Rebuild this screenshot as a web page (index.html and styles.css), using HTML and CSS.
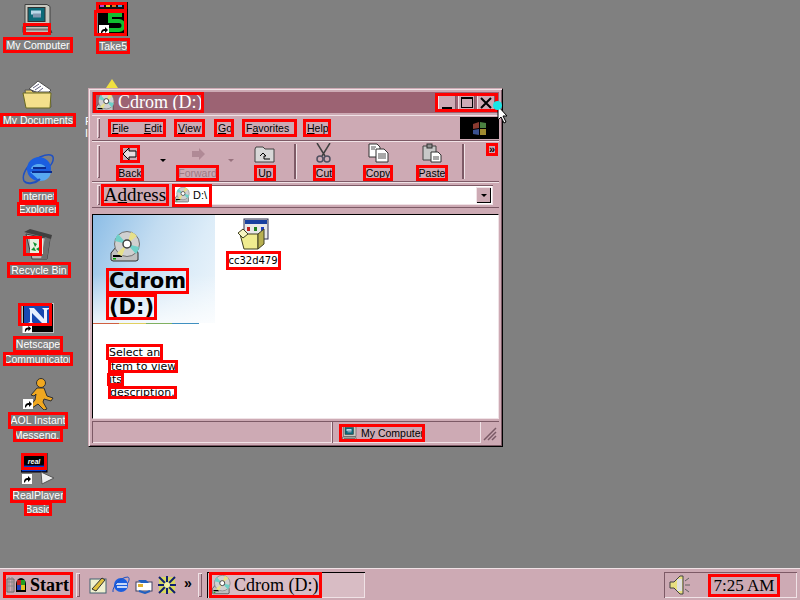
FILE: index.html
```html
<!DOCTYPE html>
<html lang="en">
<head>
<meta charset="utf-8">
<title>Cdrom (D:)</title>
<link rel="stylesheet" href="styles.css">
</head>
<body>
<svg class="defs" width="0" height="0">
  <defs>
    <symbol id="cd" viewBox="0 0 32 32">
      <path d="M2 22l5-6h20l2 6v7l-2 1H4l-2-1z" fill="#c0c0c0" stroke="#303030"/>
      <rect x="4" y="24" width="9" height="2" fill="#000"/>
      <rect x="4" y="27" width="3" height="1.500" fill="#0a0"/>
      <circle cx="18" cy="13" r="12.500" fill="#d0d0d0" stroke="#707070"/>
      <path d="M18 13L9 3a13 13 0 0 0-3 7zM18 13l9 10a13 13 0 0 0 3-7z" fill="#6fd0c8"/>
      <path d="M18 13L22 1a13 13 0 0 1 6 4zM18 13L13 25a13 13 0 0 1-5-3z" fill="#e6e08a"/>
      <circle cx="18" cy="13" r="4" fill="#fff" stroke="#404040" stroke-width="1.500"/>
    </symbol>
    <symbol id="sc" viewBox="0 0 10 10">
      <rect width="10" height="10" fill="#fff"/>
      <path d="M2 8.500C2 5 3.500 4 6 4V2l3 3-3 3V6C4.500 6 3.500 6.500 3 8.500z" fill="#000"/>
    </symbol>
    <symbol id="pc" viewBox="0 0 32 32">
      <path d="M3 2h22l3 2v19H3z" fill="#c8c8c0" stroke="#404040"/>
      <rect x="6" y="5" width="17" height="14" fill="#0c6a78" stroke="#303030"/>
      <rect x="9" y="8" width="10" height="4" fill="#b8d8e8"/>
      <rect x="11" y="11" width="8" height="4" fill="#8098b0"/>
      <path d="M1 24h26l3 6H1z" fill="#c0c0b8" stroke="#404040"/>
      <path d="M4 26h22l1 2H4z" fill="#777"/>
    </symbol>
  </defs>
</svg>

<main class="desktop">
  <div class="icon i-comp">
    <div class="art"><svg width="32" height="33"><use href="#pc"/></svg><span class="hit hit-comp"></span></div>
    <span class="box lab">My Computer</span>
  </div>
  <div class="icon i-take">
    <div class="art">
      <svg width="34" height="34" viewBox="0 0 34 34">
        <rect x="2" y="0" width="30" height="7" fill="#111"/>
        <path d="M4 2h4v3H4z" fill="#c040d0"/><path d="M10 2h4v3h-4z" fill="#e0d020"/><path d="M16 2h4v3h-4z" fill="#e07020"/><path d="M22 2h4v3h-4z" fill="#40a0e0"/>
        <rect x="2" y="7" width="30" height="27" fill="#000"/>
        <rect x="5" y="8" width="25" height="2" fill="#10c020"/>
        <path d="M26 13H14v6h9a4 4 0 0 1 0 9H12" fill="none" stroke="#10c030" stroke-width="4"/>
        <use href="#sc" x="3" y="23" width="10" height="10"/>
      </svg>
      <span class="hit hit-take1"></span><span class="hit hit-take2"></span>
    </div>
    <span class="box lab">Take5</span>
  </div>
  <div class="icon i-docs">
    <div class="art">
      <svg width="32" height="30" viewBox="0 0 32 30">
        <path d="M7 9l9-8 13 9-6 6z" fill="#fff" stroke="#505050"/>
        <path d="M11 8l6-4M13 10l6-4M16 12l5-4" stroke="#606080"/>
        <path d="M3 10h6l2 2h17l1 15H5z" fill="#e8d070" stroke="#555"/>
        <path d="M1 13h24l4 0-1 15H4z" fill="#f4e08c" stroke="#6a6a20"/>
      </svg>
    </div>
    <span class="box lab lab-tight">My Documents</span>
  </div>
  <div class="icon i-ie">
    <div class="art">
      <svg width="32" height="34" viewBox="0 0 32 34">
        <path d="M2 29C-1 22 7 10 18 5c7-3 12-3 13 0 1 4-2 8-4 10" fill="none" stroke="#2050c0" stroke-width="1.500"/>
        <circle cx="17" cy="17" r="12" fill="#1a5ee0"/>
        <path d="M9 17c1-6 14-7 15 0zM8 20h21c-1 6-5 9-11 9" fill="#58a8f0"/>
        <path d="M11 16h13M10 20h20" stroke="#0a2a90" stroke-width="2"/>
        <path d="M2 29c3 4 12 2 16-2" fill="none" stroke="#2050c0" stroke-width="2"/>
      </svg>
    </div>
    <span class="box lab lab-stack">Internet</span>
    <span class="box lab lab-stack">Explorer</span>
  </div>
  <div class="icon i-bin">
    <div class="art">
      <svg width="32" height="32" viewBox="0 0 32 32">
        <path d="M1 4l6-3 22 6-1 4z" fill="#404040"/>
        <path d="M3 6l24 5-3 20H9z" fill="#b8b8b8" stroke="#404040"/>
        <path d="M22 9l5 2-3 20h-6z" fill="#707070"/>
        <rect x="7" y="11" width="13" height="15" fill="#e8f0e0"/>
        <path d="M10 14l4 2-2 3zM18 18l-2 5-3-2zM8 22l3-3 2 4z" fill="#109030"/>
      </svg>
      <span class="hit hit-bin"></span>
    </div>
    <span class="box lab lab-wide">Recycle Bin</span>
  </div>
  <div class="icon i-net">
    <div class="art">
      <svg width="32" height="30" viewBox="0 0 32 30">
        <rect x="0" y="0" width="32" height="30" fill="#c0c0c0"/>
        <rect x="1" y="1" width="30" height="28" fill="#000"/>
        <rect x="2" y="3" width="28" height="19" fill="#1848b0"/>
        <path d="M7 5h5l10 11V7l-2-2h7v1l-2 1v15h-3L10 10v9l2 2H6v-1l2-1V7z" fill="#e8f0ff"/>
        <use href="#sc" x="1" y="21" width="9" height="9"/>
      </svg>
      <span class="hit hit-net"></span>
    </div>
    <span class="box lab lab-net">Netscape</span>
    <span class="box lab lab-stack">Communicator</span>
  </div>
  <div class="icon i-aol">
    <div class="art">
      <svg width="32" height="32" viewBox="0 0 32 32">
        <circle cx="19" cy="5" r="4.500" fill="#f0a820" stroke="#303030"/>
        <path d="M15 10h7l3 8 6 2-2 3-7-2-1 3 4 7-3 1-6-6-6 4-2-2 5-6 1-6-2 2-3-1z" fill="#f0a820" stroke="#303030"/>
        <use href="#sc" x="1" y="21" width="10" height="10"/>
      </svg>
    </div>
    <span class="box lab lab-aol">AOL Instant</span>
    <span class="box lab lab-stack">Messeng..</span>
  </div>
  <div class="icon i-real">
    <div class="art">
      <svg width="34" height="32" viewBox="0 0 34 32">
        <rect x="0" y="0" width="26" height="19" fill="#101060" stroke="#000"/>
        <rect x="2" y="3" width="22" height="9" rx="3" fill="#000"/>
        <text class="real-word" x="13" y="10.500" text-anchor="middle">real</text>
        <rect x="1" y="13" width="24" height="5" fill="#0040d0"/>
        <path d="M20 19l13 6-12 6z" fill="#eee" stroke="#555"/>
        <use href="#sc" x="1" y="21" width="10" height="10"/>
      </svg>
      <span class="hit hit-real"></span>
    </div>
    <span class="box lab lab-real">RealPlayer</span>
    <span class="box lab lab-stack">Basic</span>
  </div>

  <div class="peek peek-tri"></div>
  <div class="peek peek-text">F<br>I</div>

  <section class="window">
    <header class="titlebar">
      <div class="box title-box">
        <svg width="20" height="20"><use href="#cd"/></svg>
        <span>Cdrom (D:)</span>
      </div>
      <div class="box controls">
        <span class="ctl"><i class="g-min"></i></span>
        <span class="ctl"><i class="g-max"></i></span>
        <span class="ctl ctl-close">
          <svg width="14" height="14" viewBox="0 0 14 14"><path d="M2 2l10 10M12 2L2 12" stroke="#000" stroke-width="2"/></svg>
        </span>
      </div>
    </header>

    <nav class="row menu">
      <span class="grip"></span>
      <span class="box mi mi-fe"><span><u>F</u>ile</span><span><u>E</u>dit</span></span>
      <span class="box mi mi-view"><u>V</u>iew</span>
      <span class="box mi mi-go"><u>G</u>o</span>
      <span class="box mi mi-fav">F<u>a</u>vorites</span>
      <span class="box mi mi-help"><u>H</u>elp</span>
      <span class="flag">
        <svg width="16" height="15" viewBox="0 0 16 15"><path d="M1 3l6-2v6l-6 1z" fill="#8a3a30"/><path d="M8 1l6 1v5H8z" fill="#4a8040"/><path d="M1 9l6-1v6l-6-1z" fill="#3a5090"/><path d="M8 8h6v6H8z" fill="#a08a30"/></svg>
      </span>
    </nav>

    <div class="row tools">
      <span class="grip grip-tall"></span>
      <div class="tool t-back">
        <span class="box tool-art">
          <svg width="16" height="14" viewBox="0 0 16 14"><path d="M7 1v3h7v6H7v3L1 7z" fill="#e8dde0" stroke="#000"/></svg>
        </span>
        <span class="box tlabel tl-narrow">Back</span>
        <i class="drop"></i>
      </div>
      <div class="tool t-fwd">
        <span class="tool-art plain">
          <svg width="16" height="14" viewBox="0 0 16 14"><path d="M9 1v3H2v6h7v3l6-6z" fill="#b08a96"/></svg>
        </span>
        <span class="box tlabel tl-narrow off">Forward</span>
        <i class="drop drop-off"></i>
      </div>
      <div class="tool t-up">
        <span class="tool-art plain">
          <svg width="22" height="18" viewBox="0 0 22 18"><path d="M1 4l1-2h7l2 2h9v13H1z" fill="#d8d8d8" stroke="#404040"/><path d="M6 11l3-3 3 3h-2v3h6" fill="none" stroke="#000"/></svg>
        </span>
        <span class="box tlabel tl-wide">Up</span>
      </div>
      <span class="sep"></span>
      <div class="tool t-std">
        <span class="tool-art plain">
          <svg width="18" height="20" viewBox="0 0 18 20"><path d="M2 0l8 13M15 0L7 13" stroke="#404040" stroke-width="1.500"/><circle cx="5" cy="16" r="3" fill="none" stroke="#505060" stroke-width="1.500"/><circle cx="12" cy="16" r="3" fill="none" stroke="#505060" stroke-width="1.500"/></svg>
        </span>
        <span class="box tlabel">Cut</span>
      </div>
      <div class="tool t-std">
        <span class="tool-art plain">
          <svg width="21" height="20" viewBox="0 0 21 20"><path d="M1 1h8l3 3v10H1z" fill="#fff" stroke="#303030"/><path d="M8 6h8l4 4v9H8z" fill="#fff" stroke="#303030"/><path d="M10 11h8M10 13h8M10 15h8M3 4h5M3 6h4" stroke="#505050"/></svg>
        </span>
        <span class="box tlabel">Copy</span>
      </div>
      <div class="tool t-std">
        <span class="tool-art plain">
          <svg width="20" height="20" viewBox="0 0 20 20"><path d="M1 3h13v14H1z" fill="#c8c8c8" stroke="#404040"/><rect x="5" y="1" width="5" height="4" fill="#909090" stroke="#303030"/><path d="M9 9h7l3 3v7H9z" fill="#fff" stroke="#303030"/><path d="M11 14h6M11 16h6" stroke="#505050"/></svg>
        </span>
        <span class="box tlabel">Paste</span>
      </div>
      <span class="sep"></span>
      <span class="box more">»</span>
    </div>

    <div class="row addr">
      <span class="grip grip-addr"></span>
      <span class="box addr-label">A<u>d</u>dress</span>
      <div class="field">
        <span class="box field-val">
          <svg width="16" height="16"><use href="#cd"/></svg>
          <span>D:\</span>
        </span>
        <span class="combo"><i></i></span>
      </div>
    </div>

    <div class="view">
      <aside class="side">
        <div class="side-art">
          <svg class="side-cd" width="34" height="32"><use href="#cd"/></svg>
          <h1 class="side-title"><span class="box">Cdrom</span><span class="box">(D:)</span></h1>
        </div>
        <div class="rule"></div>
        <p class="side-text">
          <span class="box st-first">Select an</span>
          <span class="box st-in">item to view</span>
          <span class="box st-its">its</span>
          <span class="box st-desc">description.</span>
        </p>
      </aside>
      <div class="files">
        <div class="file">
          <svg width="32" height="32" viewBox="0 0 32 32">
            <rect x="7" y="1" width="24" height="20" fill="#e8e8e8" stroke="#303050"/>
            <rect x="8" y="2" width="22" height="4" fill="#1840a0"/>
            <rect x="10" y="9" width="3" height="4" fill="#c02020"/><rect x="17" y="9" width="3" height="4" fill="#208020"/><rect x="24" y="9" width="3" height="4" fill="#2040c0"/>
            <path d="M3 16h18v15H7z" fill="#f0ec90" stroke="#404020"/>
            <path d="M21 16l6-5v15l-6 5z" fill="#b8b050" stroke="#404020"/>
            <path d="M1 15l5-4 5 5-5 4z" fill="#f8f4c0" stroke="#404020"/>
          </svg>
          <span class="box file-name">cc32d479</span>
        </div>
      </div>
    </div>

    <footer class="status">
      <span class="st-left"></span>
      <span class="st-mid">
        <span class="box st-val">
          <svg width="18" height="16"><use href="#pc"/></svg>
          <span>My Computer</span>
        </span>
      </span>
      <span class="st-grip">
        <svg width="14" height="14" viewBox="0 0 14 14"><path d="M1 13L13 1M5 13l8-8M9 13l4-4" stroke="#7a5a66" stroke-width="1.500"/></svg>
      </span>
    </footer>
  </section>

  <div class="cursor">
    <span class="dot"></span>
    <svg width="12" height="19" viewBox="0 0 12 19"><path d="M1 1v14l3-3 3 6 2-1-3-6h4z" fill="#fff" stroke="#000"/></svg>
  </div>
</main>

<footer class="taskbar">
  <button class="box start" type="button">
    <svg width="22" height="18" viewBox="0 0 22 18"><path d="M1 3h7v13H1z" fill="none" stroke="#666"/><path d="M3 1v16M6 1v16M1 6h7M1 10h7" stroke="#888"/><path d="M10 8a5 6 0 0 1 10 0v8H10z" fill="#000"/><rect x="11" y="4" width="4" height="5" fill="#c02020"/><rect x="15" y="4" width="4" height="5" fill="#20a020"/><rect x="11" y="9" width="4" height="5" fill="#2040c0"/><rect x="15" y="9" width="4" height="5" fill="#e0c020"/></svg>
    <span>Start</span>
  </button>
  <span class="grip grip-task g-first"></span>
  <div class="quick">
    <svg width="18" height="18" viewBox="0 0 18 18"><rect x="1" y="3" width="16" height="14" fill="#f0f0d0" stroke="#406070"/><path d="M3 13l10-11 3 2-9 11z" fill="#e0c040" stroke="#303030"/></svg>
    <svg width="18" height="18" viewBox="0 0 18 18"><circle cx="9" cy="9" r="7" fill="#1a5ee0"/><path d="M4 8h11M5 11h10" stroke="#fff" stroke-width="1.500"/><path d="M1 16C0 11 8 1 16 1c2 1 1 5-1 7" fill="none" stroke="#2050c0"/></svg>
    <svg width="18" height="18" viewBox="0 0 18 18"><rect x="1" y="6" width="16" height="9" fill="#fff" stroke="#404060"/><path d="M3 4h8l3 3H6z" fill="#2060c0"/><path d="M4 15l6 2 5-2" fill="none" stroke="#2060c0" stroke-width="2"/><rect x="3" y="8" width="5" height="3" fill="#e0b030"/></svg>
    <svg width="18" height="18" viewBox="0 0 18 18"><rect x="1" y="1" width="16" height="16" fill="#d8d860"/><path d="M1 1l16 16M17 1L1 17M9 0v18M0 9h18" stroke="#102070" stroke-width="2"/><circle cx="9" cy="9" r="3" fill="#f0f0a0"/></svg>
  </div>
  <span class="chev">»</span>
  <span class="grip grip-task"></span>
  <div class="task">
    <span class="box task-label">
      <svg width="20" height="20"><use href="#cd"/></svg>
      <span>Cdrom (D:)</span>
    </span>
  </div>
  <div class="tray">
    <svg width="22" height="20" viewBox="0 0 22 20"><path d="M1 7h4l6-6h3v18h-3l-6-6H1z" fill="#e8e080" stroke="#404040"/><path d="M8 4h5v12H8z" fill="#e0e0e0"/><path d="M16 6l4-3M16 10h5M16 14l4 3" stroke="#606060"/></svg>
    <span class="box clock">7:25 AM</span>
  </div>
</footer>
</body>
</html>
```

FILE: styles.css
```css
:root {
  --chrome: #cdaab4;
  --hi: #f0e2e6;
  --lo: #7d5a66;
  --red: #ff0000;
}
* { box-sizing: border-box; }
html, body { margin: 0; padding: 0; height: 100%; }
body {
  width: 800px;
  height: 600px;
  overflow: hidden;
  background: #808080;
  font-family: "Liberation Sans", Arial, sans-serif;
  font-size: 11px;
  display: flex;
  flex-direction: column;
}
.defs { position: absolute; }
svg { display: block; flex: none; }

/* red annotation frame painted over whatever it surrounds */
.box { position: relative; }
.box::after {
  content: "";
  position: absolute;
  inset: 0;
  border: 3px solid var(--red);
  pointer-events: none;
}
.hit { position: absolute; border: 3px solid var(--red); }

.desktop { position: relative; flex: 1; height: 568px; }

/* desktop icons */
.icon {
  position: absolute;
  width: 76px;
  display: flex;
  flex-direction: column;
  align-items: center;
  color: #fff;
  font-size: 10.500px;
}
.art { position: relative; display: flex; justify-content: center; width: 76px; }
.lab { display: block; white-space: nowrap; padding: 2px 3px; line-height: 12px; height: 16px; margin-top: 2px; }
.lab-tight { height: 14px; padding: 1px 3px; margin-top: 3px; }
.lab-wide { padding: 2px 4px; }
.lab-stack { margin-top: -1px; height: 14px; padding: 1px; }
.lab-net { margin-top: 3px; height: 17px; }
.lab-aol { margin-top: 2px; height: 17px; padding: 2px; }
.lab-real { margin-top: 3px; height: 15px; padding: 1px 2px; }

.i-comp { left: 0; top: 2px; }
.i-take { left: 75px; top: 2px; }
.i-docs { left: 0; top: 80px; }
.i-ie { left: 0; top: 152px; }
.i-ie .art { padding-bottom: 4px; }
.i-bin { left: 1px; top: 228px; }
.i-net { left: 0; top: 303px; }
.i-aol { left: 0; top: 378px; }
.i-real { left: 0; top: 453px; }

.hit-comp { left: 23px; top: 21px; width: 28px; height: 12px; }
.hit-take1 { left: 21px; top: 0; width: 31px; height: 10px; }
.hit-take2 { left: 19px; top: 8px; width: 33px; height: 26px; }
.hit-bin { left: 22px; top: 8px; width: 19px; height: 20px; }
.hit-net { left: 18px; top: 0; width: 34px; height: 23px; }
.hit-real { left: 21px; top: 0; width: 26px; height: 17px; }
.real-word { font: italic bold 7px "Liberation Sans", Arial, sans-serif; fill: #fff; }

.peek { position: absolute; }
.peek-tri {
  left: 106px; top: 79px; width: 0; height: 0;
  border-left: 6px solid transparent;
  border-right: 6px solid transparent;
  border-bottom: 9px solid #f0e040;
}
.peek-text { left: 85px; top: 115px; color: #fff; line-height: 12px; }

/* window */
.window {
  position: absolute;
  left: 88px; top: 88px;
  width: 415px; height: 359px;
  background: var(--chrome);
  border: 1px solid #000;
  border-top-color: var(--chrome);
  border-left-color: var(--chrome);
  box-shadow: inset 1px 1px 0 var(--hi), inset -1px -1px 0 var(--lo);
  padding: 3px;
  display: flex;
  flex-direction: column;
}
.titlebar {
  height: 21px;
  background: #9c6373;
  color: #fff;
  display: flex;
  align-items: center;
  justify-content: space-between;
  flex: none;
}
.title-box {
  display: flex; align-items: center; gap: 3px;
  height: 21px; width: 111px; padding: 0 0 0 2px;
  margin-left: 1px;
  font: 18px "Liberation Serif", serif;
  white-space: nowrap;
}
.controls { display: flex; height: 19px; width: 63px; gap: 2px; margin-right: 1px; padding: 2px 3px; }
.ctl {
  flex: 1;
  display: flex; align-items: center; justify-content: center;
  background: var(--chrome);
  box-shadow: inset 1px 1px 0 var(--hi), inset -1px -1px 0 var(--lo);
}
.g-min { width: 10px; height: 2px; background: #000; margin-top: 10px; }
.g-max { width: 12px; height: 11px; border: 1px solid #000; border-top-width: 2px; }

.row { display: flex; align-items: center; flex: none; box-shadow: inset 0 1px 0 var(--hi), inset 0 -1px 0 var(--lo); }
.row > * { flex: none; }
.grip { width: 3px; background: var(--chrome); box-shadow: inset 1px 1px 0 var(--hi), inset -1px -1px 0 var(--lo); flex: none; }

.menu { height: 26px; margin-top: 2px; padding-left: 5px; color: #000; }
.menu .grip { height: 20px; }
.mi { display: flex; align-items: center; height: 18px; padding: 0 4px; white-space: nowrap; margin-left: 8px; font-size: 10.500px; }
.mi-fe { width: 58px; justify-content: space-between; padding: 0 4px; margin-left: 8px; }
.mi-view { width: 31px; margin-left: 8px; }
.mi-go { width: 20px; margin-left: 9px; }
.mi-fav { width: 55px; margin-left: 8px; }
.mi-help { width: 28px; margin-left: 6px; }
.flag {
  margin-left: auto;
  width: 39px; height: 22px;
  background: #000;
  display: flex; align-items: center; justify-content: center;
}

.tools { height: 41px; padding-left: 5px; }
.grip-tall { height: 33px; }
.tool {
  position: relative;
  display: flex; flex-direction: column; align-items: center;
  height: 39px; padding-top: 3px;
}
.t-back { width: 60px; }
.t-fwd { width: 75px; }
.t-up { width: 52px; margin-left: 4px; }
.t-std { width: 54px; }
.tool-art { display: flex; align-items: center; justify-content: center; height: 18px; width: 20px; }
.plain { width: auto; }
.t-std .tool-art { height: 20px; margin-top: -2px; }
.tlabel { display: block; font-size: 10.500px; line-height: 12px; padding: 2px 3px; height: 16px; margin-top: 2px; white-space: nowrap; }
.tl-narrow { padding: 2px; }
.tl-wide { padding: 2px 4px; }
.off { color: #9c7a86; }
.drop { position: absolute; top: 17px; width: 0; height: 0; border: 3px solid transparent; border-top: 3px solid #000; border-bottom: 0; }
.t-back .drop { right: -6px; }
.drop-off { right: 1px; border-top-color: #98727e; }
.sep { width: 2px; height: 35px; background: var(--lo); box-shadow: 1px 0 0 var(--hi); margin: 0 1px 0 3px; }
.more {
  margin-left: 21px; align-self: flex-start; margin-top: 2px;
  width: 12px; height: 13px;
  font-size: 11px; font-weight: bold; line-height: 12px; text-align: center;
}

.addr { height: 26px; padding-left: 5px; }
.grip-addr { height: 20px; }
.addr-label { margin-left: 1px; font: 19px/22px "Liberation Serif", serif; width: 68px; height: 22px; text-align: center; white-space: nowrap; }
.field {
  margin-left: 3px; width: 321px; height: 20px;
  background: #fff;
  box-shadow: inset 1px 1px 0 var(--lo), inset -1px -1px 0 var(--hi);
  display: flex; justify-content: space-between; align-items: center;
}
.field-val { display: flex; align-items: center; gap: 3px; width: 40px; height: 23px; padding-left: 2px; white-space: nowrap; }
.combo {
  width: 15px; height: 16px; margin-right: 2px;
  background: var(--chrome);
  box-shadow: inset 1px 1px 0 var(--hi), inset -1px -1px 0 #000;
  display: flex; align-items: center; justify-content: center;
}
.combo i { width: 0; height: 0; border: 3px solid transparent; border-top: 3px solid #000; border-bottom: 0; }

.view {
  margin-top: 6px;
  height: 205px;
  background: #fff;
  border: 1px solid #000;
  border-right-color: var(--hi);
  border-bottom-color: var(--hi);
  display: flex;
  flex: none;
}
.side { width: 122px; flex: none; }
.side-art {
  height: 108px;
  padding: 16px 0 0 13px;
  background:
    linear-gradient(180deg, rgba(255,255,255,0) 55%, rgba(255,255,255,.75) 100%),
    linear-gradient(115deg, #8cbde6 0%, #c2dcf1 40%, #dcecf8 70%, #eef6fc 100%);
}
.side-cd { margin-left: 2px; }
.side-title { margin: 5px 0 0; font: bold 21px/26px "DejaVu Sans", sans-serif; color: #000; }
.side-title .box { display: block; width: fit-content; padding: 0 3px; }
.rule {
  width: 106px; height: 1px;
  background: linear-gradient(90deg, #d06040 0 25%, #e0d060 25% 50%, #80b060 50% 75%, #4090c0 75%);
}
.side-text { margin: 20px 0 0 13px; font: 11px/13px "DejaVu Sans", sans-serif; color: #000; }
.side-text .box { display: block; width: fit-content; padding: 0 3px; height: 13px; white-space: nowrap; }
.side-text .st-first { height: 16px; padding: 2px 3px 0; }
.side-text .st-in { margin-left: 2px; padding: 0 2px 0 0; }
.side-text .st-its { margin-left: 1px; padding: 0 2px; }
.side-text .st-desc { margin-left: 2px; padding: 0 2px; }
.files { flex: 1; padding: 3px 0 0 10px; }
.file { width: 56px; display: flex; flex-direction: column; align-items: center; }
.file-name { display: block; margin-top: 1px; padding: 3px 0; height: 19px; width: 55px; font: 10px/13px "DejaVu Sans", sans-serif; white-space: nowrap; text-align: center; }

.status { display: flex; height: 22px; margin-top: 2px; flex: none; color: #000; }
.st-left { width: 240px; box-shadow: inset 1px 1px 0 var(--lo), inset -1px -1px 0 var(--hi); }
.st-mid { flex: 1; padding: 3px 0 0 7px; box-shadow: inset 1px 1px 0 var(--lo), inset -1px -1px 0 var(--hi); }
.st-grip { width: 18px; display: flex; align-items: flex-end; justify-content: flex-end; padding: 0 2px 2px 0; box-shadow: inset 0 1px 0 var(--lo); }
.st-val { display: flex; align-items: center; gap: 2px; width: 86px; height: 18px; padding-left: 2px; white-space: nowrap; font-size: 10.500px; }

.cursor { position: absolute; left: 497px; top: 105px; }
.dot { position: absolute; left: -4px; top: -4px; width: 9px; height: 9px; border-radius: 50%; background: #19e6e6; }

/* taskbar */
.taskbar {
  height: 32px;
  flex: none;
  background: var(--chrome);
  box-shadow: inset 0 1px 0 var(--hi);
  display: flex;
  align-items: center;
  padding: 2px 3px 0 3px;
}
.start {
  display: flex; align-items: center; gap: 2px;
  width: 70px; height: 26px; padding: 0 0 0 3px;
  border: 0;
  background: var(--chrome);
  box-shadow: inset 1px 1px 0 var(--hi), inset -1px -1px 0 #000;
  font: bold 18px "Liberation Serif", serif;
  color: #000;
}
.grip-task { height: 24px; width: 4px; margin-left: 3px; }
.g-first { margin-right: 9px; }
.quick { display: flex; gap: 5px; }
.chev { margin-left: 8px; width: 10px; font-size: 14px; font-weight: bold; line-height: 14px; align-self: flex-start; margin-top: 6px; }
.chev + .grip-task { margin-left: 4px; }
.task {
  margin-left: 5px;
  width: 158px; height: 26px;
  box-shadow: inset 1px 1px 0 #000, inset -1px -1px 0 var(--hi);
  background: #d8bcc4;
  padding: 0 0 0 2px;
}
.task-label { display: flex; align-items: center; gap: 3px; width: 113px; height: 26px; padding-left: 2px; font: 18px "Liberation Serif", serif; white-space: nowrap; }
.tray {
  margin-left: auto;
  width: 133px; height: 26px;
  box-shadow: inset 1px 1px 0 var(--lo), inset -1px -1px 0 var(--hi);
  display: flex; align-items: center;
  padding-left: 5px;
}
.clock { margin-left: 17px; width: 72px; height: 23px; text-align: center; font: 17px/23px "Liberation Serif", serif; white-space: nowrap; }
```
